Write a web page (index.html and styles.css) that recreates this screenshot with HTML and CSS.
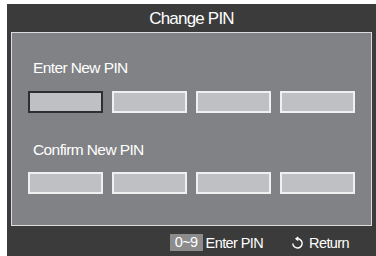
FILE: index.html
```html
<!DOCTYPE html>
<html lang="en">
<head>
    <meta charset="UTF-8">
    <meta name="viewport" content="width=device-width, initial-scale=1.0">
    <title>Change PIN</title>
    <link rel="stylesheet" href="styles.css">
</head>
<body>
    <div class="screen">
        <div class="title">Change PIN</div>

        <div class="panel">
            <p class="label">Enter New PIN</p>
            <div class="pin-row">
                <div class="pin-box active"></div>
                <div class="pin-box"></div>
                <div class="pin-box"></div>
                <div class="pin-box"></div>
            </div>

            <p class="label second">Confirm New PIN</p>
            <div class="pin-row">
                <div class="pin-box"></div>
                <div class="pin-box"></div>
                <div class="pin-box"></div>
                <div class="pin-box"></div>
            </div>
        </div>

        <div class="footer">
            <span class="key">0~9</span>
            <span class="hint">Enter PIN</span>
            <svg class="return-icon" width="13" height="14" viewBox="0 0 14 14">
                <path d="M6 2.5 A5 5 0 1 1 2 7.5" fill="none" stroke="#fff" stroke-width="1.5"/>
                <path d="M7.8 0.7 L5.5 2.5 L7.8 4.3" fill="none" stroke="#fff" stroke-width="1.5"/>
            </svg>
            <span class="hint">Return</span>
        </div>
    </div>
</body>
</html>
```
FILE: styles.css
```css
body {
    margin: 0;
    background-color: #fff;
    font-family: "Liberation Sans", Arial, sans-serif;
}
.screen {
    margin: 4px 0 0 7px;
    width: 369px;
    height: 252px;
    background-color: #3b3b3b; /* dark frame */
    color: #fff;
}
.title {
    height: 28px;
    line-height: 30px;
    text-align: center;
    font-size: 17px;
    letter-spacing: -0.8px;
}
.panel {
    margin: 0 4px;
    height: 192px;
    background-color: #818285; /* mid gray */
    border: 1px solid #dcdcdc;
}
.label {
    margin: 26px 0 0 21px;
    font-size: 15.5px;
    line-height: 18px;
    letter-spacing: -0.6px;
}
.pin-row {
    display: flex;
    gap: 9px;
    margin: 14px 0 0 16px;
}
.label.second {
    margin-top: 28px;
}
.label.second + .pin-row {
    margin-top: 13px;
}
.pin-box {
    width: 71px;
    height: 18px;
    background-color: #bfc0c3;
    border: 2px solid #f0f0f0;
}
.pin-box.active {
    border-color: #2e2e2e;
}
.footer {
    height: 30px;
    display: flex;
    align-items: center;
    justify-content: flex-end;
    padding-right: 27px;
    font-size: 14.5px;
    letter-spacing: -0.6px;
}
.key {
    background-color: #8c8c8c;
    width: 33px;
    height: 17px;
    line-height: 17px;
    text-align: center;
    margin-right: 3px;
    margin-top: 3px;
}
.hint {
    margin-top: 3px;
}
.return-icon {
    margin: 3px 5px 0 28px;
}
```
